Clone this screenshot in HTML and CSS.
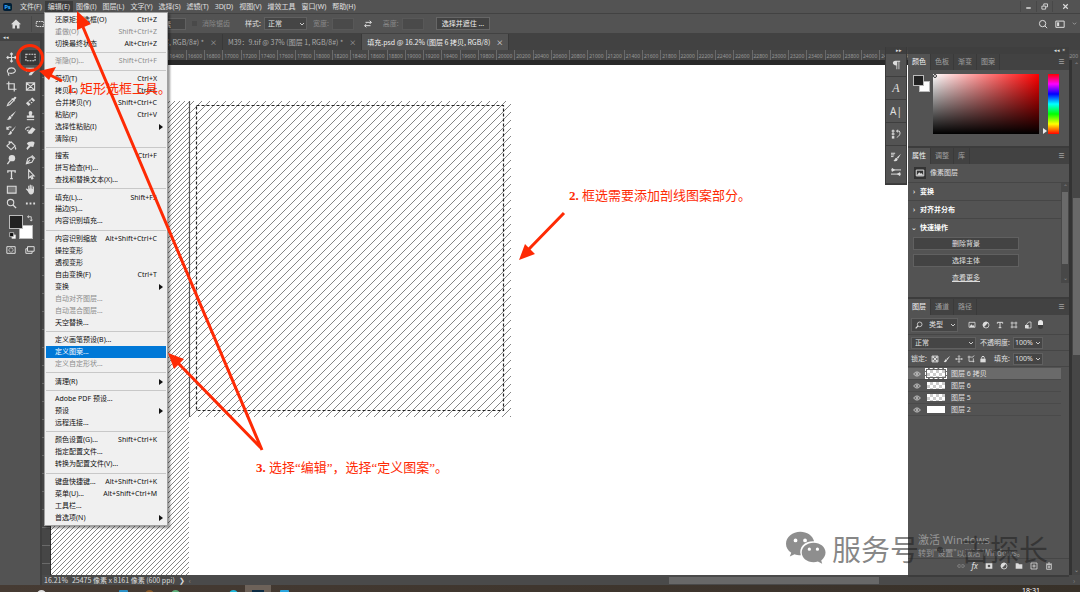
FILE: index.html
```html
<!DOCTYPE html>
<html lang="zh-CN">
<head>
    <meta charset="UTF-8">
    <meta name="viewport" content="width=device-width, initial-scale=1.0">
    <title>填充.psd</title>
    <link rel="stylesheet" href="styles.css">
</head>
<body>
    <header class="menubar">
        <span class="logo">Ps</span>
        <nav class="menus">
            <button>文件(F)</button>
            <button class="open">编辑(E)</button>
            <button>图像(I)</button>
            <button>图层(L)</button>
            <button>文字(Y)</button>
            <button>选择(S)</button>
            <button>滤镜(T)</button>
            <button>3D(D)</button>
            <button>视图(V)</button>
            <button>增效工具</button>
            <button>窗口(W)</button>
            <button>帮助(H)</button>
        </nav>
        <div class="window-buttons">
            <button aria-label="最小化"><svg viewBox="0 0 12 12"><path d="M3 8h6" stroke-width="2"/></svg></button>
            <button aria-label="还原"><svg viewBox="0 0 12 12"><path d="M2.500 5.500h5v4h-5zM5 5V2.500h5v4H8"/></svg></button>
            <button aria-label="关闭"><svg viewBox="0 0 12 12"><path d="M3 3l6 6M9 3l-6 6" stroke-width="1.500"/></svg></button>
        </div>
    </header>

    <div class="options">
        <button class="home" aria-label="主页"><svg viewBox="0 0 12 12"><path class="fill" d="M6 1.500L1 6.200h1.500V10.500h2.500V7.500h2v3h2.500V6.200H11z"/></svg></button>
        <button class="marquee-option" aria-label="矩形选框"><svg viewBox="0 0 12 12"><path d="M1.500 3h9v6h-9z" stroke-dasharray="2 1"/></svg></button>
        <input class="field feather" aria-label="羽化" value="0 像素">
        <label class="dim check"><input type="checkbox" disabled>消除锯齿</label>
        <label class="style-option">样式: <select class="field"><option>正常</option></select></label>
        <label class="dim size">宽度: <input class="field" disabled></label>
        <button class="swap" aria-label="互换"><svg viewBox="0 0 12 12"><path d="M3 4h7M8 2l2 2-2 2M9 8H2M4 6L2 8l2 2"/></svg></button>
        <label class="dim size">高度: <input class="field" disabled></label>
        <button class="select-mask">选择并遮住 ...</button>
        <div class="options-right">
            <button aria-label="搜索"><svg viewBox="0 0 12 12"><circle cx="5.500" cy="5.500" r="3.800"/><path d="M8.300 8.300L11 11"/></svg></button>
            <button aria-label="工作区"><svg viewBox="0 0 12 12"><path d="M1 2.500h10v7.500H1z"/><path class="fill" d="M2.500 4H5v4.500H2.500z"/></svg></button>
            <button class="tiny" aria-label="展开"><svg viewBox="0 0 12 12"><path d="M2 4l4 4 4-4"/></svg></button>
        </div>
    </div>

    <main class="workspace">
        <aside class="toolbar">
            <div class="toolbar-head">◂◂</div>
            <div class="tools">
                <button aria-label="移动"><svg viewBox="0 0 12 12"><path d="M6 1v10M1 6h10M4.500 2.500L6 1l1.500 1.500M4.500 9.500L6 11l1.500-1.500M2.500 4.500L1 6l1.500 1.500M9.500 4.500L11 6 9.500 7.500"/></svg></button>
                <button class="active" aria-label="矩形选框"><svg viewBox="0 0 12 12"><path d="M1 2.500h10v7H1z" stroke-dasharray="2 1"/></svg></button>
                <button aria-label="套索"><svg viewBox="0 0 12 12"><path d="M3 8C0 6 2 2 6 2s6 4 2 5.500C6.500 8.200 5 8.200 3.500 7.700M3 7.500c-1 1-.5 2 .5 3"/></svg></button>
                <button aria-label="对象选择"><svg viewBox="0 0 12 12"><path d="M1.500 6V2.500h8V5"/><path class="fill" d="M5 8l5-5 1.500 1.500L7 10H4z"/></svg></button>
                <button aria-label="裁剪"><svg viewBox="0 0 12 12"><path d="M3 .500V9h8.500M.500 3H9v8.500" stroke-width="1.300"/></svg></button>
                <button aria-label="图框"><svg viewBox="0 0 12 12"><path d="M1.500 2h9v8h-9zM1.500 2l9 8M10.500 2l-9 8"/></svg></button>
                <button aria-label="吸管"><svg viewBox="0 0 12 12"><path d="M1.500 10.500l1-2.500L7 3.500 8.500 5 4 9.500z"/><path class="fill" d="M6 3l3 3 .7-.7-.6-.8 2-2c.7-1-.6-2.300-1.600-1.600l-2 2-.8-.6z"/></svg></button>
                <button aria-label="修复画笔"><svg viewBox="0 0 12 12"><path class="fill" d="M1 8l7-6.500L11 4.500 4 11z"/><path class="cut" d="M4 6l3 3M6 4l3 3M5 7.500L7.500 5"/></svg></button>
                <button aria-label="画笔"><svg viewBox="0 0 12 12"><path class="fill" d="M11 1L5 6l1.500 1.500zM4.500 6.500c-2 0-1 3-3.500 3.500 2 1.500 5 .5 5-2z"/></svg></button>
                <button aria-label="图章"><svg viewBox="0 0 12 12"><path class="fill" d="M4 3a2 2 0 114 0c0 1.500-.7 1.500-.7 3H10v2.500H2V6h2.700C4.700 4.500 4 4.500 4 3z"/><path d="M2 10.500h8"/></svg></button>
                <button aria-label="历史画笔"><svg viewBox="0 0 12 12"><path class="fill" d="M11 1L6 6l1.200 1.200zM5.500 6.500c-2 0-1 3-3.500 3.500 2 1.500 4.500.5 4.500-2z"/><path d="M1 4.500c1-2.500 3-3 5-2M1 2v2.500h2.500"/></svg></button>
                <button aria-label="背景橡皮擦"><svg viewBox="0 0 12 12"><path class="fill" d="M3 8l5-5.500 3.500 2-4 5H4z"/><path d="M.500 5C1 3 3 1.500 5 2.500M2 6.500l2-1"/></svg></button>
                <button aria-label="油漆桶"><svg viewBox="0 0 12 12"><path d="M1 6.500L5.500 2 10 6.500 5.500 10.500zM3.500 1v4"/><path class="fill" d="M10 7c2 2 1 3.500.5 3.500S9 9 10 7z"/></svg></button>
                <button aria-label="涂抹"><svg viewBox="0 0 12 12"><path class="fill" d="M2 4c1-3 8-3 8.500-1L9 7.500 6 7l-3.500 4L1.500 9 4 6z"/></svg></button>
                <button aria-label="减淡"><svg viewBox="0 0 12 12"><circle class="fill" cx="6.500" cy="4.500" r="3.500"/><path d="M4.500 7L1.500 11" stroke-width="1.500"/></svg></button>
                <button aria-label="钢笔"><svg viewBox="0 0 12 12"><path d="M1.500 10.500L3 5l4-2 2.500 2.500L7.500 9zM1.500 10.500l4-4M7.500 1.500l3.500 3.500"/></svg></button>
                <button aria-label="文字"><svg viewBox="0 0 12 12"><path d="M2 4V2h8v2M6 2v8.500M4.500 10.500h3" stroke-width="1.400"/></svg></button>
                <button aria-label="路径选择"><svg viewBox="0 0 12 12"><path d="M4 1v9l2-2 1.500 3 1.200-.6L7.300 7.500H10z"/></svg></button>
                <button aria-label="矩形"><svg viewBox="0 0 12 12"><path d="M1.500 2.500h9.500v7.500H1.500z" fill="#777"/></svg></button>
                <button aria-label="抓手"><svg viewBox="0 0 12 12"><path class="fill" d="M3 8L.800 5.500l1-.7L3.500 6V2h1.200v3h.5V.800h1.200V5h.5V1.300h1.200V5.500h.5V2.800h1.200V8c0 2-1.500 3.500-3.300 3.500S4 10 3 8z"/></svg></button>
                <button aria-label="缩放"><svg viewBox="0 0 12 12"><circle cx="5" cy="5" r="3.500"/><path d="M7.500 7.500L11 11" stroke-width="1.500"/></svg></button>
                <button aria-label="更多"><svg viewBox="0 0 12 12"><path class="fill" d="M1 5h2v2H1zM5 5h2v2H5zM9 5h2v2H9z"/></svg></button>
            </div>
            <div class="swatches">
                <span class="bg"></span><span class="fg"></span>
                <svg class="swap-colors" viewBox="0 0 12 12"><path d="M3 3h6v7M5 1L2.500 3 5 5M7 8l2 2.500L11 8" stroke-width="1.500"/></svg>
                <svg class="default-colors" viewBox="0 0 12 12"><path d="M5 5h6v6H5z" fill="#fff"/><path d="M1 1h7v7H1z" fill="#111"/></svg>
            </div>
            <div class="modes">
                <button aria-label="快速蒙版"><svg viewBox="0 0 12 12"><path d="M1 2h10v8H1z"/><circle cx="6" cy="6" r="2.500" stroke-dasharray="1 .5"/></svg></button>
                <button aria-label="屏幕模式"><svg viewBox="0 0 12 12"><path d="M3 2h8v5.500H3zM3 4.500H1V10h7.500V7.500"/></svg></button>
            </div>
        </aside>

        <section class="document">
            <div class="tabs">
                <button class="tab first">图层, RGB/8#) * <i>×</i></button>
                <button class="tab">M39：9.tif @ 37% (图层 1, RGB/8#) * <i>×</i></button>
                <button class="tab active">填充.psd @ 16.2% (图层 6 拷贝, RGB/8) <i>×</i></button>
            </div>
            <div class="ruler" id="ruler"></div>
            <div class="view">
                <div class="ruler-side"></div>
                <div class="canvas">
                    <svg class="art" width="1024" height="520" role="img" aria-label="剖线图案">
                        <defs>
                            <pattern id="dense" width="5" height="5" patternUnits="userSpaceOnUse"><path d="M-1 6L6 -1M-1 1L1 -1M4 6L6 4" stroke="#666" stroke-width=".8"/></pattern>
                            <pattern id="sparse" width="8" height="8" patternUnits="userSpaceOnUse"><path d="M-1 9L9 -1M-1 1L1 -1M7 9L9 7" stroke="#666" stroke-width=".8"/></pattern>
                        </defs>
                        <rect x="0" y="41" width="138" height="479" fill="url(#dense)"/>
                        <rect x="138" y="41" width="322" height="316" fill="url(#sparse)"/>
                        <path d="M138.500 41v316" stroke="#555"/>
                        <path d="M145.500 45.500h307v305h-307z" fill="none" stroke="#222" stroke-dasharray="3 2"/>
                    </svg>
                </div>
                <div class="scroll-y"><span>⌃</span><div class="thumb"></div><span>⌄</span></div>
            </div>
            <div class="status">
                <span>16.21%</span>
                <span>25475 像素 x 8161 像素 (600 ppi)</span>
                <span>❯</span>
                <span class="faint">‹</span>
                <div class="scroll-x"><div class="thumb"></div></div>
                <span class="faint">›</span>
            </div>
        </section>

        <div class="dock">
            <div class="dock-icons">
                <div class="dock-head">▸▸</div>
                <button aria-label="段落"><svg viewBox="0 0 12 12"><path class="fill" d="M5.500 1H11v1h-1v9H9V2H7.500v9h-1V6.500C1 6.500 1 1 5.500 1z"/></svg></button>
                <button class="glyph script">A</button>
                <button class="glyph">A|</button>
                <button aria-label="历史记录"><svg viewBox="0 0 12 12"><path d="M1.500 1.500h2v2h-2zM1.500 5h2v2h-2zM7 2.500h3c2 3 0 6-3 7.500M8.500 1L6.500 2.500 8.500 4"/><path class="fill" d="M1 8.500h3v3H1z"/></svg></button>
                <button class="tall" aria-label="画笔设置">
                    <svg viewBox="0 0 12 12"><path class="fill" d="M12 2L7 6.500 8.500 8zM6.500 7c-2 0-1.500 3-3.500 3.500 2 1.500 5 .5 5-2z"/><path d="M0 1.500h5M0 3.500h4M0 5.500h3"/></svg>
                    <svg viewBox="0 0 12 12"><path d="M0 3.500h12M0 8.500h12"/><path class="fill" d="M1 1l4 2.500L1 6zM11 6v5L7 8.500z"/></svg>
                </button>
            </div>
            <div class="panels">
                <div class="dock-head">◂◂ &nbsp;×</div>
                <section class="panel color">
                    <div class="panel-tabs"><button class="active">颜色</button><button>色板</button><button>渐变</button><button>图案</button><i>≡</i></div>
                    <div class="color-body">
                        <div class="mini-swatches"><span class="bg"></span><span class="fg"></span></div>
                        <div class="field-color"><div class="picker"></div></div>
                        <div class="hue"></div>
                    </div>
                </section>
                <section class="panel properties">
                    <div class="panel-tabs"><button class="active">属性</button><button>调整</button><button>库</button><i>≡</i></div>
                    <div class="layer-kind"><svg viewBox="0 0 12 12"><path d="M1.500 2.500h9v7h-9z"/><path class="fill" d="M2 9l3-4 2 2 1-1 2 3z"/></svg>像素图层</div>
                    <div class="props-scroll">
                        <div class="props">
                            <h3><span>›</span>变换</h3>
                            <h3><span>›</span>对齐并分布</h3>
                            <h3 class="last"><span>⌄</span>快速操作</h3>
                            <button class="quick">删除背景</button>
                            <button class="quick">选择主体</button>
                            <a href="#">查看更多</a>
                        </div>
                        <div class="props-bar"><span>⌃</span><div class="thumb"></div><span>⌄</span></div>
                    </div>
                </section>
                <section class="panel layers">
                    <div class="panel-tabs"><button class="active">图层</button><button>通道</button><button>路径</button><i>≡</i></div>
                    <div class="layer-row filter">
                        <label class="kind"><svg viewBox="0 0 12 12"><circle cx="7" cy="5" r="3.500"/><path d="M4.500 7.500L1 11" stroke-width="1.800"/></svg><select class="field" aria-label="类型"><option>类型</option></select></label>
                        <svg viewBox="0 0 12 12"><path d="M1.500 2h9v7.500h-9z"/><path class="fill" d="M2 9l3-4 2 2 1-1 2 3z"/></svg>
                        <svg viewBox="0 0 12 12"><circle cx="6" cy="6" r="4.500"/><path class="fill" d="M2.800 9.200A4.500 4.500 0 019.200 2.800z"/></svg>
                        <svg viewBox="0 0 12 12"><path d="M2 4V2h8v2M6 2v8M4 10h4" stroke-width="1.500"/></svg>
                        <svg viewBox="0 0 12 12"><path d="M3 1v10M9 1v10M1 3h10M1 9h10"/></svg>
                        <svg viewBox="0 0 12 12"><path d="M4 10.500V5l3-3.500h3.500v9z"/><path class="fill" d="M1.500 6H7v5H1.500z"/></svg>
                        <span class="toggle"></span>
                    </div>
                    <div class="layer-row">
                        <select class="field blend" aria-label="混合模式"><option>正常</option></select>
                        <label>不透明度: <select class="field percent"><option>100%</option></select></label>
                    </div>
                    <div class="layer-row lock">
                        <span>锁定:</span>
                        <svg viewBox="0 0 12 12"><path d="M1.500 1.500h9v9h-9z"/><path class="fill" d="M2 2h3v3H2zM7 2h3v3H7zM4.500 4.500h3v3h-3zM2 7h3v3H2zM7 7h3v3H7z"/></svg>
                        <svg viewBox="0 0 12 12"><path class="fill" d="M11 1L5 6l1.500 1.500zM4.500 6.500c-2 0-1 3-3.500 3.500 2 1.500 5 .5 5-2z"/></svg>
                        <svg viewBox="0 0 12 12"><path d="M6 1v10M1 6h10M4.500 2.500L6 1l1.500 1.500M4.500 9.500L6 11l1.500-1.500M2.500 4.500L1 6l1.500 1.500M9.500 4.500L11 6 9.500 7.500"/></svg>
                        <svg viewBox="0 0 12 12"><path d="M1 3h6M3 1v8.500h8M9.500 11V5M7 4l4-3"/></svg>
                        <svg viewBox="0 0 12 12"><path class="fill" d="M2 5.500h8V11H2z"/><path d="M4 5.500V4a2 2 0 014 0v1.500" stroke-width="1.500"/></svg>
                        <label>填充: <select class="field percent"><option>100%</option></select></label>
                    </div>
                    <ul class="layer-list">
                        <li class="selected"><svg viewBox="0 0 12 12"><path d="M1 6c2.500-4 7.500-4 10 0-2.500 4-7.500 4-10 0z"/><circle cx="6" cy="6" r="1.500"/></svg><span class="thumb-image"></span>图层 6 拷贝</li>
                        <li><svg viewBox="0 0 12 12"><path d="M1 6c2.500-4 7.500-4 10 0-2.500 4-7.500 4-10 0z"/><circle cx="6" cy="6" r="1.500"/></svg><span class="thumb-image"></span>图层 6</li>
                        <li><svg viewBox="0 0 12 12"><path d="M1 6c2.500-4 7.500-4 10 0-2.500 4-7.500 4-10 0z"/><circle cx="6" cy="6" r="1.500"/></svg><span class="thumb-image"></span>图层 5</li>
                        <li><svg viewBox="0 0 12 12"><path d="M1 6c2.500-4 7.500-4 10 0-2.500 4-7.500 4-10 0z"/><circle cx="6" cy="6" r="1.500"/></svg><span class="thumb-image plain"></span>图层 2</li>
                    </ul>
                    <div class="layer-foot">
                        <svg class="off" viewBox="0 0 12 12"><path d="M5 4H3a2 2 0 000 4h2M7 4h2a2 2 0 010 4H7M4 6h4"/></svg>
                        <em>fx</em>
                        <svg viewBox="0 0 12 12"><path class="fill" fill-rule="evenodd" d="M1 2h10v8H1zM6 4a2 2 0 100 4 2 2 0 000-4z"/></svg>
                        <svg viewBox="0 0 12 12"><circle cx="6" cy="6" r="4.500"/><path class="fill" d="M2.800 9.200A4.500 4.500 0 019.200 2.800z"/></svg>
                        <svg viewBox="0 0 12 12"><path class="fill" d="M1 2h4l1 1.500h5V10H1z"/></svg>
                        <svg viewBox="0 0 12 12"><path d="M1.500 1.500h9v9h-9zM6 3.500v5M3.500 6h5"/></svg>
                        <svg viewBox="0 0 12 12"><path d="M2.500 4h7v7h-7zM1.500 3h9M4.500 1.500h3M5 5.500v4M7 5.500v4"/></svg>
                    </div>
                </section>
            </div>
        </div>
    </main>

    <footer class="taskbar">
        <i class="dot white"></i><i class="dot blue"></i><i class="dot orange"></i><i class="dot green"></i><i class="dot cyan"></i>
        <span class="running"></span><i class="dot sky"></i>
        <time>18:31</time>
    </footer>

    <div class="edit-menu" role="menu">
        <button>还原矩形选框(O)<kbd>Ctrl+Z</kbd></button>
        <button disabled>重做(O)<kbd>Shift+Ctrl+Z</kbd></button>
        <button>切换最终状态<kbd>Alt+Ctrl+Z</kbd></button>
        <hr>
        <button disabled>渐隐(D)...<kbd>Shift+Ctrl+F</kbd></button>
        <hr>
        <button>剪切(T)<kbd>Ctrl+X</kbd></button>
        <button>拷贝(C)<kbd>Ctrl+C</kbd></button>
        <button>合并拷贝(Y)<kbd>Shift+Ctrl+C</kbd></button>
        <button>粘贴(P)<kbd>Ctrl+V</kbd></button>
        <button class="sub">选择性粘贴(I)</button>
        <button>清除(E)</button>
        <hr>
        <button>搜索<kbd>Ctrl+F</kbd></button>
        <button>拼写检查(H)...</button>
        <button>查找和替换文本(X)...</button>
        <hr>
        <button>填充(L)...<kbd>Shift+F5</kbd></button>
        <button>描边(S)...</button>
        <button>内容识别填充...</button>
        <hr>
        <button>内容识别缩放<kbd>Alt+Shift+Ctrl+C</kbd></button>
        <button>操控变形</button>
        <button>透视变形</button>
        <button>自由变换(F)<kbd>Ctrl+T</kbd></button>
        <button class="sub">变换</button>
        <button disabled>自动对齐图层...</button>
        <button disabled>自动混合图层...</button>
        <button>天空替换...</button>
        <hr>
        <button>定义画笔预设(B)...</button>
        <button class="hover">定义图案...</button>
        <button disabled>定义自定形状...</button>
        <hr>
        <button class="sub">清理(R)</button>
        <hr>
        <button>Adobe PDF 预设...</button>
        <button class="sub">预设</button>
        <button>远程连接...</button>
        <hr>
        <button>颜色设置(G)...<kbd>Shift+Ctrl+K</kbd></button>
        <button>指定配置文件...</button>
        <button>转换为配置文件(V)...</button>
        <hr>
        <button>键盘快捷键...<kbd>Alt+Shift+Ctrl+K</kbd></button>
        <button>菜单(U)...<kbd>Alt+Shift+Ctrl+M</kbd></button>
        <button>工具栏...</button>
        <button class="sub">首选项(N)</button>
    </div>

    <!-- tutorial notes over the editor -->
    <svg class="arrows" width="600" height="480" aria-hidden="true">
        <circle cx="30" cy="58" r="12.500"/>
        <path d="M62 81L50 75M262 450L83 27M261 448L178 363M564 213L529 249"/>
        <path class="head" d="M39 71l17-4-7 13zM77 11l14 13-14 6zM168 353l16 6-10 10zM519 260l6-16 10 10z"/>
    </svg>
    <p class="note one"><b>1.</b> 矩形选框工具。</p>
    <p class="note two"><b>2.</b> 框选需要添加剖线图案部分。</p>
    <p class="note three"><b>3.</b> 选择“编辑”，选择“定义图案”。</p>

    <div class="activate"><strong>激活 Windows</strong><span>转到"设置"以激活 Windows。</span></div>
    <div class="watermark">
        <svg viewBox="0 0 42 34"><path d="M15 0C7 0 0 5.500 0 12.500c0 4 2 7 5.500 9.500L4 26l5-2.500c2 .6 4 1 6.500 1C13 16 20 9.500 29.500 10 28 4 22 0 15 0zM10 7a2 2 0 110 4 2 2 0 010-4zm10 0a2 2 0 110 4 2 2 0 010-4z" fill-rule="evenodd"/><path d="M29 11.500c-7 0-12.500 4.500-12.500 10.300S22 32 29 32c1.500 0 3-.3 4.500-.7L38 33.500l-1-3.500c2.700-2 4.500-5 4.500-8.200C41.500 16 36 11.500 29 11.500zm-4.500 5a1.700 1.700 0 110 3.400 1.700 1.700 0 010-3.400zm8.500 0a1.700 1.700 0 110 3.400 1.700 1.700 0 010-3.400z" fill-rule="evenodd"/></svg>
        <span>服务号 · 古探长</span>
    </div>
    <script src="script.js"></script>
</body>
</html>
```
FILE: styles.css
```css
* {
    box-sizing: border-box;
}
body {
    display: flex;
    flex-direction: column;
    height: 100vh;
    margin: 0;
    overflow: hidden;
    position: relative;
    background: #535353;
    color: #e0e0e0;
    font-family: "Noto Sans", "Noto Sans CJK SC", sans-serif;
    font-size: 7px;
    line-height: 10px;
}
button, input, select {
    margin: 0;
    padding: 0;
    border: 0;
    background: none;
    color: inherit;
    font: inherit;
    white-space: nowrap;
}
button {
    display: flex;
    align-items: center;
    justify-content: center;
}
label {
    display: flex;
    align-items: center;
    white-space: nowrap;
}
i {
    font-style: normal;
}
svg {
    flex: none;
    width: 10px;
    height: 10px;
    fill: none;
    stroke: #dcdcdc;
    stroke-width: 1.2;
}
svg .fill {
    fill: #dcdcdc;
    stroke: none;
}
svg .cut {
    stroke: #535353;
}
.field {
    height: 12px;
    padding: 0 3px;
    border: 1px solid #606060;
    background: #454545;
}
select.field {
    appearance: none;
    background: #454545 url("data:image/svg+xml,%3Csvg xmlns='http://www.w3.org/2000/svg' viewBox='0 0 6 6'%3E%3Cpath d='M1 2l2 2 2-2' fill='none' stroke='%23ccc'/%3E%3C/svg%3E") right 1px center / 6px 6px no-repeat;
    outline: 0;
}
.dim {
    color: #888;
}

/* Top bars */
.menubar {
    display: flex;
    align-items: center;
    flex: none;
    height: 14px;
    padding-left: 3px;
    border-bottom: 1px solid #424242;
}
.logo {
    width: 9px;
    height: 8px;
    border-radius: 2px;
    background: #001e36;
    color: #31a8ff;
    font-size: 6px;
    font-weight: bold;
    line-height: 8px;
    text-align: center;
}
.menus {
    display: flex;
    margin-left: 5px;
}
.menus button {
    height: 12px;
    padding: 0 3px;
}
.menus .open {
    background: #3c3c3c;
}
.window-buttons {
    display: flex;
    margin-left: auto;
    padding-right: 2px;
}
.window-buttons button {
    width: 16px;
    height: 11px;
    border-left: 1px solid #484848;
}
.window-buttons button:last-child {
    width: 26px;
}
.window-buttons svg {
    width: 9px;
    height: 9px;
}
.options {
    display: flex;
    align-items: center;
    flex: none;
    height: 20px;
    border-bottom: 1px solid #424242;
}
.home {
    width: 32px;
    height: 16px;
    border-right: 1px solid #484848;
}
.home svg {
    width: 12px;
    height: 12px;
}
.marquee-option {
    width: 16px;
}
.feather {
    width: 86px;
    margin-left: 52px;
    text-align: right;
    padding-right: 14px;
}
.check {
    margin-left: 6px;
}
.check input {
    appearance: none;
    width: 5px;
    height: 5px;
    margin-right: 5px;
    background: #494949;
}
.style-option {
    margin-left: 15px;
}
.style-option .field {
    width: 43px;
    height: 13px;
    margin-left: 3px;
}
.size {
    margin-left: 6px;
}
.size .field {
    width: 22px;
    margin-left: 3px;
    border-color: #585858;
    background: #4a4a4a;
}
.swap {
    margin: 0 4px 0 9px;
}
.select-mask {
    height: 13px;
    margin-left: 12px;
    padding: 0 5px;
    border: 1px solid #666;
    background: #424242;
    color: #f0f0f0;
}
.options-right {
    display: flex;
    align-items: center;
    gap: 7px;
    margin-left: auto;
    padding-right: 3px;
}
.options-right .tiny svg {
    width: 5px;
    height: 5px;
}

/* Tools */
.workspace {
    display: flex;
    flex: 1;
    min-height: 0;
    position: relative;
}
.toolbar {
    flex: none;
    width: 42px;
    border-right: 2px solid #3e3e3e;
}
.toolbar-head {
    height: 7px;
    padding-left: 3px;
    background: #424242;
    font-size: 5px;
    line-height: 7px;
}
.tools {
    display: grid;
    grid-template-columns: 18px 18px;
    gap: 0 1px;
    height: 161px;
    margin: 9px 0 0 2px;
}
.tools svg {
    width: 11px;
    height: 11px;
}
.tools .active {
    background: #383838;
}
.swatches {
    position: relative;
    width: 24px;
    height: 24px;
    margin: 4px 0 0 9px;
}
.swatches span, .mini-swatches span {
    position: absolute;
    width: 14px;
    height: 14px;
    border: 1px solid #bbb;
}
.swatches .fg, .mini-swatches .fg {
    top: 0;
    left: 0;
    background: #222;
}
.swatches .bg, .mini-swatches .bg {
    right: 0;
    bottom: 0;
    background: #fff;
}
.swap-colors {
    position: absolute;
    top: 0;
    right: 0;
    width: 7px;
    height: 7px;
}
.default-colors {
    position: absolute;
    bottom: 0;
    left: 0;
    width: 7px;
    height: 7px;
}
.modes {
    display: flex;
    gap: 9px;
    padding: 6px;
}

/* Document */
.document {
    display: flex;
    flex-direction: column;
    flex: 1;
    min-width: 0;
    background: #464646;
}
.tabs {
    display: flex;
    flex: none;
    height: 16px;
    padding-left: 118px;
    background: #424242;
    font-family: "Noto Sans CJK SC", sans-serif;
}
.tab {
    gap: 6px;
    padding: 0 5px;
    border-right: 1px solid #393939;
    color: #aaa;
}
.tab.first {
    justify-content: flex-end;
    width: 63px;
}
.tab.active {
    background: #535353;
    color: #f0f0f0;
}
.ruler {
    display: flex;
    flex: none;
    height: 10px;
    padding-left: 16px;
    overflow: hidden;
    color: #999;
    font-size: 5px;
    line-height: 12px;
}
.ruler span {
    flex: 1;
    min-width: 0;
    border-left: 1px solid #6a6a6a;
    padding-left: 1px;
}
.view {
    display: flex;
    flex: 1;
    min-height: 0;
}
.ruler-side {
    width: 9px;
    border-right: 1px solid #2b2b2b;
    background: repeating-linear-gradient(#464646 0 17px, #6a6a6a 17px 18px);
}
.canvas {
    flex: 1;
    min-width: 0;
    overflow: hidden;
    border-top: 5px solid #292929;
    background: #fff;
}
.art {
    display: block;
    width: 1024px;
    height: 520px;
    margin-top: -5px;
    stroke: none;
}
.scroll-y {
    display: flex;
    flex-direction: column;
    align-items: center;
    width: 12px;
    border-left: 4px solid #333;
    color: #999;
    font-size: 6px;
}
.scroll-y .thumb {
    width: 7px;
    height: 157px;
    margin: 128px 0 auto;
    background: #686868;
}
.status {
    display: flex;
    align-items: center;
    flex: none;
    height: 10px;
    gap: 4px;
    padding: 0 5px 0 2px;
    background: #4a4a4a;
    color: #ddd;
    font-family: "Noto Sans CJK SC", sans-serif;
}
.faint {
    color: #888;
}
.scroll-x {
    flex: 1;
    padding-left: 46%;
}
.scroll-x .thumb {
    width: 210px;
    height: 7px;
    background: #686868;
}

/* Floating panels */
.dock {
    display: flex;
    align-items: flex-start;
    gap: 1px;
    position: absolute;
    top: 13px;
    right: 11px;
    bottom: 8px;
}
.dock-head {
    height: 7px;
    padding-right: 4px;
    background: #3f3f3f;
    font-size: 5px;
    line-height: 7px;
    text-align: right;
}
.dock-icons {
    width: 22px;
    background: #535353;
    border: 1px solid #3a3a3a;
    border-top: 0;
}
.dock-icons button {
    width: 100%;
    height: 23px;
    border-bottom: 1px solid #3e3e3e;
}
.dock-icons .tall {
    flex-direction: column;
    gap: 5px;
    height: 38px;
}
.dock-icons .glyph {
    font-size: 10px;
}
.dock-icons .script {
    font-family: "Liberation Serif", serif;
    font-style: italic;
    font-size: 12px;
}
.panels {
    display: flex;
    flex-direction: column;
    width: 161px;
    height: 100%;
    background: #535353;
}
.panel-tabs {
    display: flex;
    height: 16px;
    background: #424242;
    color: #a0a0a0;
}
.panel-tabs button {
    padding: 0 4px;
    border-right: 1px solid #3a3a3a;
}
.panel-tabs .active {
    background: #535353;
    color: #f5f5f5;
}
.panel-tabs i {
    margin-left: auto;
    padding: 3px 4px;
    font-weight: bold;
}
.panel {
    border-bottom: 2px solid #3c3c3c;
}
.color {
    height: 94px;
}
.properties {
    height: 151px;
}
.color-body {
    display: flex;
    padding: 4px 10px 0 5px;
}
.mini-swatches {
    position: relative;
    width: 17px;
    height: 17px;
    margin-top: 1px;
}
.mini-swatches span {
    width: 11px;
    height: 11px;
}
.field-color {
    flex: 1;
    height: 60px;
    margin: 0 4px 0 3px;
    background: linear-gradient(transparent, #000), linear-gradient(90deg, #fff, #f00);
}
.picker {
    width: 4px;
    height: 4px;
    border: 1px solid #333;
    border-radius: 50%;
}
.color-body::after {
    order: 1;
    align-self: flex-end;
    border: 3px solid transparent;
    border-right: 0;
    border-left: 4px solid #eee;
    content: "";
}
.hue {
    order: 2;
    width: 11px;
    height: 60px;
    margin-left: 1px;
    background: linear-gradient(#f00, #f0f, #00f, #0ff, #0f0, #ff0, #f00);
}
.layer-kind {
    display: flex;
    align-items: center;
    gap: 4px;
    height: 19px;
    padding-left: 6px;
    border-bottom: 1px solid #464646;
}
.layer-kind svg {
    width: 12px;
    height: 12px;
    padding: 1px;
    background: #333;
}
.props-scroll {
    display: flex;
    height: 100px;
}
.props {
    flex: 1;
}
.props h3 {
    display: flex;
    align-items: center;
    height: 18px;
    margin: 0;
    border-bottom: 1px solid #464646;
    color: #fff;
    font-size: 7px;
}
.props h3.last {
    border-bottom: 0;
}
.props h3 span {
    width: 12px;
    text-align: center;
    font-weight: normal;
}
.quick {
    width: 106px;
    height: 13px;
    margin: 0 0 4px 5px;
    border: 1px solid #606060;
    background: #434343;
}
.props a {
    display: block;
    width: 116px;
    color: #ddd;
    line-height: 14px;
    text-align: center;
}
.props-bar {
    display: flex;
    flex-direction: column;
    align-items: center;
    width: 8px;
    background: #484848;
    color: #888;
    font-size: 6px;
    line-height: 9px;
}
.props-bar .thumb {
    flex: 1;
    width: 6px;
    margin-bottom: 10px;
    background: #6a6a6a;
}
.layers {
    display: flex;
    flex-direction: column;
    flex: 1;
}
.layer-row {
    display: flex;
    align-items: center;
    height: 16px;
    padding: 0 3px;
    border-bottom: 1px solid #464646;
}
.layer-row svg {
    width: 8px;
    height: 8px;
}
.filter {
    gap: 6px;
    height: 20px;
}
.kind {
    width: 47px;
    margin-right: 4px;
    padding-left: 3px;
    border: 1px solid #606060;
    background: #454545;
}
.kind .field {
    flex: 1;
    border: 0;
}
.toggle {
    width: 5px;
    height: 9px;
    border-radius: 3px;
    background: linear-gradient(#e8e8e8 55%, #3c3c3c 55%);
}
.blend {
    width: 65px;
    margin-right: 4px;
}
.layer-row label {
    gap: 3px;
}
.layer-row .percent {
    width: 30px;
    padding: 0 1px;
}
.layer-row.lock {
    gap: 4px;
}
.lock label {
    margin-left: auto;
    margin-right: 23px;
}
.layer-list {
    flex: 1;
    margin: 1px 8px 0 0;
    padding: 0;
    list-style: none;
}
.layer-list li {
    display: flex;
    align-items: center;
    gap: 6px;
    height: 12px;
    padding-left: 5px;
    border-bottom: 1px solid #4a4a4a;
}
.layer-list svg {
    width: 8px;
    height: 8px;
}
.selected {
    background: #6a6a6a;
}
.thumb-image {
    width: 18px;
    height: 7px;
    background: repeating-conic-gradient(#ccc 0 25%, #fff 0 50%) 0 0 / 6px 6px;
}
.selected .thumb-image {
    outline: 1px dashed #fff;
    outline-offset: 1px;
}
.thumb-image.plain {
    background: #fff;
}
.layer-foot {
    display: flex;
    align-items: center;
    justify-content: flex-end;
    gap: 7px;
    height: 14px;
    margin-bottom: 3px;
    padding-right: 16px;
    border-top: 1px solid #464646;
}
.layer-foot svg {
    width: 8px;
    height: 8px;
}
.layer-foot em {
    font-size: 8px;
}
.off {
    opacity: .4;
}

/* Taskbar */
.taskbar {
    display: flex;
    flex: none;
    gap: 17px;
    height: 7px;
    padding: 0 40px 0 37px;
    overflow: hidden;
    background: linear-gradient(90deg, #463b33, #383129);
}
.dot {
    width: 9px;
    height: 9px;
    margin-top: 5px;
    border-radius: 50%;
}
.white {
    margin-right: 56px;
    background: #ddd;
}
.blue {
    border-radius: 1px;
    background: #2b8fc4;
}
.orange {
    background: #8a5a2a;
}
.green {
    margin-right: 32px;
    background: #5fae7a;
}
.cyan {
    background: #1fb6d8;
}
.running {
    width: 26px;
    margin-left: -10px;
    border: solid #6d6259;
    border-width: 5px 7px 0;
    background: #0d2c44;
}
.sky {
    margin-left: -8px;
    border-radius: 1px;
    background: #29a5dd;
}
.taskbar time {
    margin-left: auto;
    line-height: 12px;
    color: #fff;
}

/* Edit menu */
.edit-menu {
    display: flex;
    flex-direction: column;
    position: absolute;
    top: 12px;
    left: 44px;
    width: 124px;
    height: 514px;
    padding: 1px;
    border: 1px solid #a0a0a0;
    background: #f0f0f0;
    box-shadow: 2px 2px 2px rgba(0, 0, 0, .4);
    color: #111;
}
.edit-menu button {
    flex: 24;
    min-height: 0;
    justify-content: space-between;
    padding: 0 9px;
    line-height: 8px;
}
.edit-menu button:disabled {
    color: #8c8c8c;
}
.edit-menu kbd {
    font: inherit;
}
.edit-menu hr {
    flex: 11;
    width: 100%;
    margin: 0;
    border: 0;
    background: linear-gradient(#c8c8c8, #c8c8c8) center / 100% 1px no-repeat;
}
.edit-menu .sub::after {
    margin-right: -6px;
    border: 3px solid transparent;
    border-left: 4px solid #111;
    border-right: 0;
    content: "";
}
.edit-menu .hover {
    background: #0078d7;
    color: #fff;
}

/* Notes */
.arrows {
    position: absolute;
    top: 0;
    left: 0;
    width: 600px;
    height: 480px;
    stroke: #fe2a04;
    stroke-width: 3;
    pointer-events: none;
}
.arrows .head {
    fill: #fe2a04;
    stroke: none;
}
.note {
    position: absolute;
    margin: 0;
    color: #fe2a04;
    font-family: "Liberation Serif", "Noto Sans CJK SC", serif;
    font-size: 13px;
    line-height: 20px;
    white-space: nowrap;
}
.one {
    top: 79px;
    left: 67px;
}
.two {
    top: 186px;
    left: 569px;
}
.three {
    top: 458px;
    left: 256px;
}
.activate {
    display: flex;
    flex-direction: column;
    position: absolute;
    right: 52px;
    bottom: 33px;
    width: 110px;
    color: rgba(255, 255, 255, .4);
    font-size: 8px;
    line-height: 12px;
    white-space: nowrap;
}
.activate strong {
    font-size: 11px;
    font-weight: normal;
    line-height: 14px;
}
.watermark {
    display: flex;
    align-items: center;
    gap: 6px;
    position: absolute;
    right: 32px;
    bottom: 24px;
    color: rgba(30, 30, 30, .55);
    font-family: "Noto Sans CJK SC", sans-serif;
    font-size: 29px;
    line-height: 40px;
    white-space: nowrap;
}
.watermark svg {
    width: 40px;
    height: 34px;
    fill: rgba(30, 30, 30, .5);
    stroke: none;
}
```
FILE: script.js
```js
// one label per 200 px of the document
const ruler = document.getElementById('ruler');
for (let i = 0; i < 56; i++) {
    const mark = document.createElement('span');
    mark.textContent = 15200 + i * 200;
    ruler.appendChild(mark);
}
```
